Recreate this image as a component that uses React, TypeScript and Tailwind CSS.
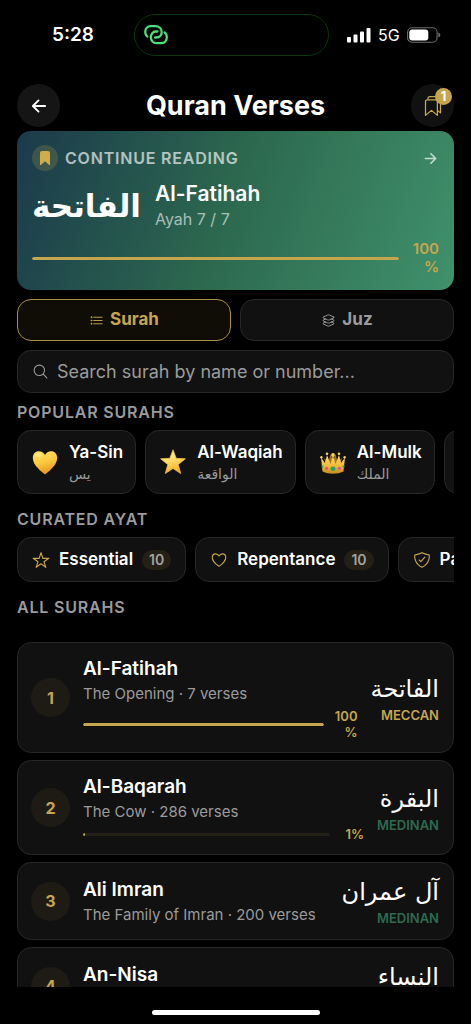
import type { ReactNode } from "react";
import {
  IoArrowBack,
  IoArrowForward,
  IoBookmark,
  IoBookmarksOutline,
  IoHeartOutline,
  IoLayersOutline,
  IoListOutline,
  IoSearchOutline,
  IoShieldCheckmarkOutline,
  IoStarOutline,
} from "react-icons/io5";

type Surah = {
  number: number;
  name: string;
  arabic: string;
  meaning: string;
  verses: number;
  place: "MECCAN" | "MEDINAN";
  progress?: number;
};

const surahs: Surah[] = [
  { number: 1, name: "Al-Fatihah", arabic: "الفاتحة", meaning: "The Opening", verses: 7, place: "MECCAN", progress: 100 },
  { number: 2, name: "Al-Baqarah", arabic: "البقرة", meaning: "The Cow", verses: 286, place: "MEDINAN", progress: 1 },
  { number: 3, name: "Ali Imran", arabic: "آل عمران", meaning: "The Family of Imran", verses: 200, place: "MEDINAN" },
  { number: 4, name: "An-Nisa", arabic: "النساء", meaning: "The Women", verses: 176, place: "MEDINAN" },
];

function HotspotIcon() {
  return (
    <svg viewBox="0 0 24 20" className="h-5 w-6" fill="none" stroke="#4be07a" strokeWidth="2.3" strokeLinecap="round" aria-hidden="true">
      <path d="M3.4 11.6C1.8 10.4 1.200 8.900 1.200 7 1.200 3.600 3.400 1.200 6.800 1.200h4.400C15 1.200 17.700 3.600 17.700 7c0 3.200-2.300 5.500-5.400 5.500h-1.200" />
      <path d="M20.600 7.400C22.200 8.600 22.800 10.100 22.800 12c0 3.400-2.200 6.200-5.600 6.200h-4.400C9 18.200 6.900 15.600 6.900 12.200 6.900 9 8.800 6.500 11.900 6.500h1.500" />
    </svg>
  );
}

function HeartEmoji() {
  return (
    <svg viewBox="0 0 26 26" className="size-[26px]" aria-hidden="true">
      <defs>
        <linearGradient id="heart" x1="0" y1="0" x2="0.3" y2="1">
          <stop offset="0" stopColor="#ffe36b" />
          <stop offset="0.55" stopColor="#fdc93c" />
          <stop offset="1" stopColor="#e89a1c" />
        </linearGradient>
      </defs>
      <path
        fill="url(#heart)"
        d="M13 25.500C9.500 22.500.8 16.500.8 8.800.8 4.900 3.400 2.200 6.900 2.200c2.700 0 5 1.500 6.100 3.900 1.100-2.400 3.400-3.900 6.100-3.900 3.500 0 6.100 2.700 6.100 6.600C25.200 16.500 16.500 22.500 13 25.500z"
      />
      <ellipse cx="6.600" cy="6.300" rx="3.200" ry="2" fill="#fff1a0" opacity="0.6" />
    </svg>
  );
}

function StarEmoji() {
  return (
    <svg viewBox="0 0 26 26" className="size-[26px]" aria-hidden="true">
      <defs>
        <linearGradient id="star" x1="0.2" y1="0" x2="0.5" y2="1">
          <stop offset="0" stopColor="#fff3b0" />
          <stop offset="0.5" stopColor="#fddc62" />
          <stop offset="1" stopColor="#f3a91f" />
        </linearGradient>
      </defs>
      <path
        fill="url(#star)"
        stroke="#f5bd3c"
        strokeWidth="0.8"
        strokeLinejoin="round"
        d="M13 .8l3.200 8.500 9.200.5-7.200 5.700 2.500 9L13 19.400l-7.700 5.100 2.500-9L.6 9.800l9.200-.5z"
      />
    </svg>
  );
}

function CrownEmoji() {
  return (
    <svg viewBox="0 0 26 26" className="size-[26px]" aria-hidden="true">
      <defs>
        <linearGradient id="crown" x1="0" y1="0" x2="0" y2="1">
          <stop offset="0" stopColor="#ffe27a" />
          <stop offset="0.6" stopColor="#f0b732" />
          <stop offset="1" stopColor="#c98a1e" />
        </linearGradient>
      </defs>
      <path fill="#a87420" d="M4 9l3 9h12l3-9-4.500 4-2-8-2.500 7-2.500-7-2 8z" />
      <path
        fill="url(#crown)"
        d="M1 8.500l4 5.500 2-8 3.500 9L13 6.500l2.500 8.500L19 6l2 8 4-5.500-1.500 14C20 24.200 17 24.700 13 24.700S6 24.200 2.500 22.500z"
      />
      <g fill="#f9d35a">
        <circle cx="1.400" cy="8.200" r="1.200" />
        <circle cx="7" cy="4.800" r="1.300" />
        <circle cx="13" cy="6" r="1.900" />
        <circle cx="19" cy="4.800" r="1.300" />
        <circle cx="24.600" cy="8.200" r="1.200" />
      </g>
      <ellipse cx="13" cy="19.800" rx="2.500" ry="2.200" fill="#1fa56b" />
      <circle cx="6.600" cy="19.300" r="1.600" fill="#e0558a" />
      <circle cx="19.400" cy="19.300" r="1.600" fill="#e0558a" />
      <circle cx="2.400" cy="17.600" r="1.100" fill="#1fa56b" />
      <circle cx="23.600" cy="17.600" r="1.100" fill="#1fa56b" />
    </svg>
  );
}

function StatusBar() {
  return (
    <div className="grid h-[84px] shrink-0 grid-cols-[1fr_195px_1fr] items-start pt-[14px] pr-2">
      <div className="flex h-[42px] items-center justify-center pl-3 text-[19px] font-semibold">5:28</div>
      <div className="flex h-[42px] items-center rounded-full border border-[#0a3509] px-[9px]">
        <HotspotIcon />
      </div>
      <div className="flex h-[42px] items-center gap-[7px] pl-[18px]">
        <svg viewBox="0 0 24 16" className="h-4 w-6 shrink-0" fill="#fff" aria-hidden="true">
          <rect x="0" y="10" width="4" height="5.500" rx="1" />
          <rect x="6.500" y="7.500" width="4" height="8" rx="1" />
          <rect x="13" y="4.500" width="4" height="11" rx="1" />
          <rect x="19.500" y="1" width="4" height="14.500" rx="1" />
        </svg>
        <span className="text-[16px]">5G</span>
        <svg viewBox="0 0 34 16" className="h-4 w-[34px] shrink-0" aria-hidden="true">
          <rect x="0.600" y="0.800" width="29.500" height="14.400" rx="4.500" fill="none" stroke="#6d6d6d" strokeWidth="1.100" />
          <rect x="2.300" y="2.500" width="19" height="11" rx="3" fill="#fff" />
          <path d="M31.400 5.500c1.300.5 1.900 1.400 1.900 2.500s-.6 2-1.900 2.500z" fill="#6d6d6d" />
        </svg>
      </div>
    </div>
  );
}

function Arabic({ children, className }: { children: ReactNode; className: string }) {
  return (
    <span lang="ar" dir="rtl" className={`font-['DejaVu_Sans',sans-serif] whitespace-nowrap ${className}`}>
      {children}
    </span>
  );
}

function SectionTitle({ children, className = "" }: { children: ReactNode; className?: string }) {
  return <h2 className={`text-[16px] leading-5 font-semibold tracking-wider text-[#9b9b9b] ${className}`}>{children}</h2>;
}

function Progress({ value }: { value: number }) {
  return (
    <span className="block h-[3px] flex-1 overflow-hidden rounded-full bg-[#c9a84c]/10">
      <span className="block h-full min-w-[2px] rounded-full bg-[#c5a64f]" style={{ width: `${value}%` }} />
    </span>
  );
}

function Percent({ value }: { value: number }) {
  return (
    <>
      {value}
      <wbr />%
    </>
  );
}

function PopularCard({ icon, name, arabic }: { icon: ReactNode; name: string; arabic: string }) {
  return (
    <button className="flex h-16 shrink-0 items-center gap-[11px] rounded-[14px] border border-[#272727] bg-[#111] pr-3 pl-[14px] text-left">
      {icon}
      <span className="flex flex-col items-start">
        <span className="text-[17px] leading-6 font-semibold">{name}</span>
        <Arabic className="text-[14px] leading-5 text-[#9b9b9b]">{arabic}</Arabic>
      </span>
    </button>
  );
}

function CuratedChip({ icon, name }: { icon: ReactNode; name: string }) {
  return (
    <button className="flex h-[45px] shrink-0 items-center gap-[9px] rounded-[14px] border border-[#272727] bg-[#111] px-[14px]">
      <span className="text-[18px] text-[#c9a84c]">{icon}</span>
      <span className="text-[17px] font-semibold">{name}</span>
      <span className="rounded-full bg-[#242015] px-[7px] text-[14px] leading-5 font-semibold text-[#a3a3a3]">10</span>
    </button>
  );
}

function SurahRow({ surah }: { surah: Surah }) {
  return (
    <li>
      <button className="flex w-full items-center gap-[13px] rounded-[14px] border border-[#272727] bg-[#111] py-3 pr-[14px] pl-[13px] text-left">
        <span className="flex size-[39px] shrink-0 items-center justify-center rounded-full bg-[#1e1b14] text-[16px] font-bold text-[#c5a64f]">
          {surah.number}
        </span>
        <span className="flex min-w-0 flex-1 flex-col">
          <span className="text-[19px] leading-7 font-semibold">{surah.name}</span>
          <span className="text-[15px] leading-[22px] whitespace-nowrap text-[#9b9b9b]">
            {surah.meaning} · {surah.verses} verses
          </span>
          {surah.progress !== undefined && (
            <span className="mt-[3px] flex items-center gap-2">
              <Progress value={surah.progress} />
              <span className="w-[26px] text-right text-[13px] leading-4 font-semibold text-[#c5a64f]">
                <Percent value={surah.progress} />
              </span>
            </span>
          )}
        </span>
        <span className="flex shrink-0 flex-col items-end">
          <Arabic className="text-[24px] leading-[34px]">{surah.arabic}</Arabic>
          <span
            className={`text-[13px] leading-[18px] font-semibold ${surah.place === "MECCAN" ? "text-[#c5a64f]" : "text-[#2d6a4f]"}`}
          >
            {surah.place}
          </span>
        </span>
      </button>
    </li>
  );
}

export default function App() {
  return (
    <div className="flex h-screen flex-col overflow-hidden bg-black font-['Inter',sans-serif] text-white">
      <StatusBar />

      <header className="flex shrink-0 items-center justify-between px-[17px]">
        <button aria-label="Back" className="flex size-[43px] items-center justify-center rounded-full bg-[#151515]">
          <IoArrowBack className="size-5" />
        </button>
        <h1 className="text-[27px] leading-8 font-bold">Quran Verses</h1>
        <button aria-label="Bookmarks" className="relative flex size-[43px] items-center justify-center rounded-full bg-[#111]">
          <IoBookmarksOutline className="size-5 text-[#c9a84c]" />
          <span className="absolute top-1 right-0.5 flex size-[17px] items-center justify-center rounded-full bg-[#c5a64f] text-[13px] font-bold">
            1
          </span>
        </button>
      </header>

      <main className="mx-[17px] mt-1 flex min-h-0 flex-1 flex-col overflow-hidden">
        <a
          href="#continue"
          className="block shrink-0 rounded-[14px] bg-linear-[110deg,#1b3a4b,#2d6a4f_50%,#40916c] px-[15px] py-[14px]"
        >
          <span className="flex items-center gap-[7px]">
            <span className="flex size-[26px] items-center justify-center rounded-full bg-[#c9a84c]/20">
              <IoBookmark className="size-4 text-[#d0ad4c]" />
            </span>
            <span className="flex-1 text-[16px] leading-[26px] font-semibold tracking-wider text-white/65">CONTINUE READING</span>
            <IoArrowForward className="size-[17px] text-white/70" />
          </span>
          <span className="mt-[9px] flex h-[52px] items-center gap-[14px]">
            <Arabic className="text-[31px] leading-[52px] font-bold">الفاتحة</Arabic>
            <span className="flex flex-col">
              <span className="text-[21px] leading-[26px] font-semibold">Al-Fatihah</span>
              <span className="text-[16px] leading-6 text-white/60">Ayah 7 / 7</span>
            </span>
          </span>
          <span className="mt-2 flex items-center gap-[10px]">
            <Progress value={100} />
            <span className="w-[30px] text-right text-[15px] leading-[18px] font-semibold text-[#c5a64f]">
              <Percent value={100} />
            </span>
          </span>
        </a>

        <div className="mt-[9px] grid shrink-0 grid-cols-2 gap-[9px]">
          <button className="flex h-[42px] items-center justify-center gap-[6px] rounded-[14px] border border-[#a98e45] bg-[#100d06] text-[17px] font-bold text-[#c5a64f]">
            <IoListOutline className="size-[15px]" />
            Surah
          </button>
          <button className="flex h-[42px] items-center justify-center gap-[6px] rounded-[14px] border border-[#272727] bg-[#111] text-[17px] font-bold text-[#9b9b9b]">
            <IoLayersOutline className="size-[15px]" />
            Juz
          </button>
        </div>

        <label className="mt-[9px] flex h-[43px] shrink-0 items-center gap-2 rounded-[14px] border border-[#272727] bg-[#111] px-[14px]">
          <IoSearchOutline className="size-[17px] shrink-0 text-[#9b9b9b]" />
          <input
            type="search"
            aria-label="Search surah"
            placeholder="Search surah by name or number..."
            className="min-w-0 flex-1 bg-transparent text-[18px] outline-none placeholder:text-[#9b9b9b]"
          />
        </label>

        <SectionTitle className="mt-[9px]">POPULAR SURAHS</SectionTitle>
        <div className="mt-2 flex shrink-0 gap-[9px] overflow-hidden">
          <PopularCard icon={<HeartEmoji />} name="Ya-Sin" arabic="يس" />
          <PopularCard icon={<StarEmoji />} name="Al-Waqiah" arabic="الواقعة" />
          <PopularCard icon={<CrownEmoji />} name="Al-Mulk" arabic="الملك" />
          <button
            aria-label="More surahs"
            className="h-16 w-[120px] shrink-0 rounded-[14px] border border-[#272727] bg-[#111]"
          />
        </div>

        <SectionTitle className="mt-[15px]">CURATED AYAT</SectionTitle>
        <div className="mt-2 flex shrink-0 gap-[9px] overflow-hidden">
          <CuratedChip icon={<IoStarOutline />} name="Essential" />
          <CuratedChip icon={<IoHeartOutline />} name="Repentance" />
          <CuratedChip icon={<IoShieldCheckmarkOutline />} name="Patience" />
        </div>

        <SectionTitle className="mt-[15px]">ALL SURAHS</SectionTitle>
        <ul className="mt-[25px] flex min-h-0 flex-1 flex-col gap-[7px] overflow-hidden">
          {surahs.map((surah) => (
            <SurahRow key={surah.number} surah={surah} />
          ))}
        </ul>
      </main>

      <footer className="flex h-[37px] shrink-0 justify-center pt-[23px]">
        <div className="h-[5px] w-[168px] rounded-full bg-white" />
      </footer>
    </div>
  );
}
